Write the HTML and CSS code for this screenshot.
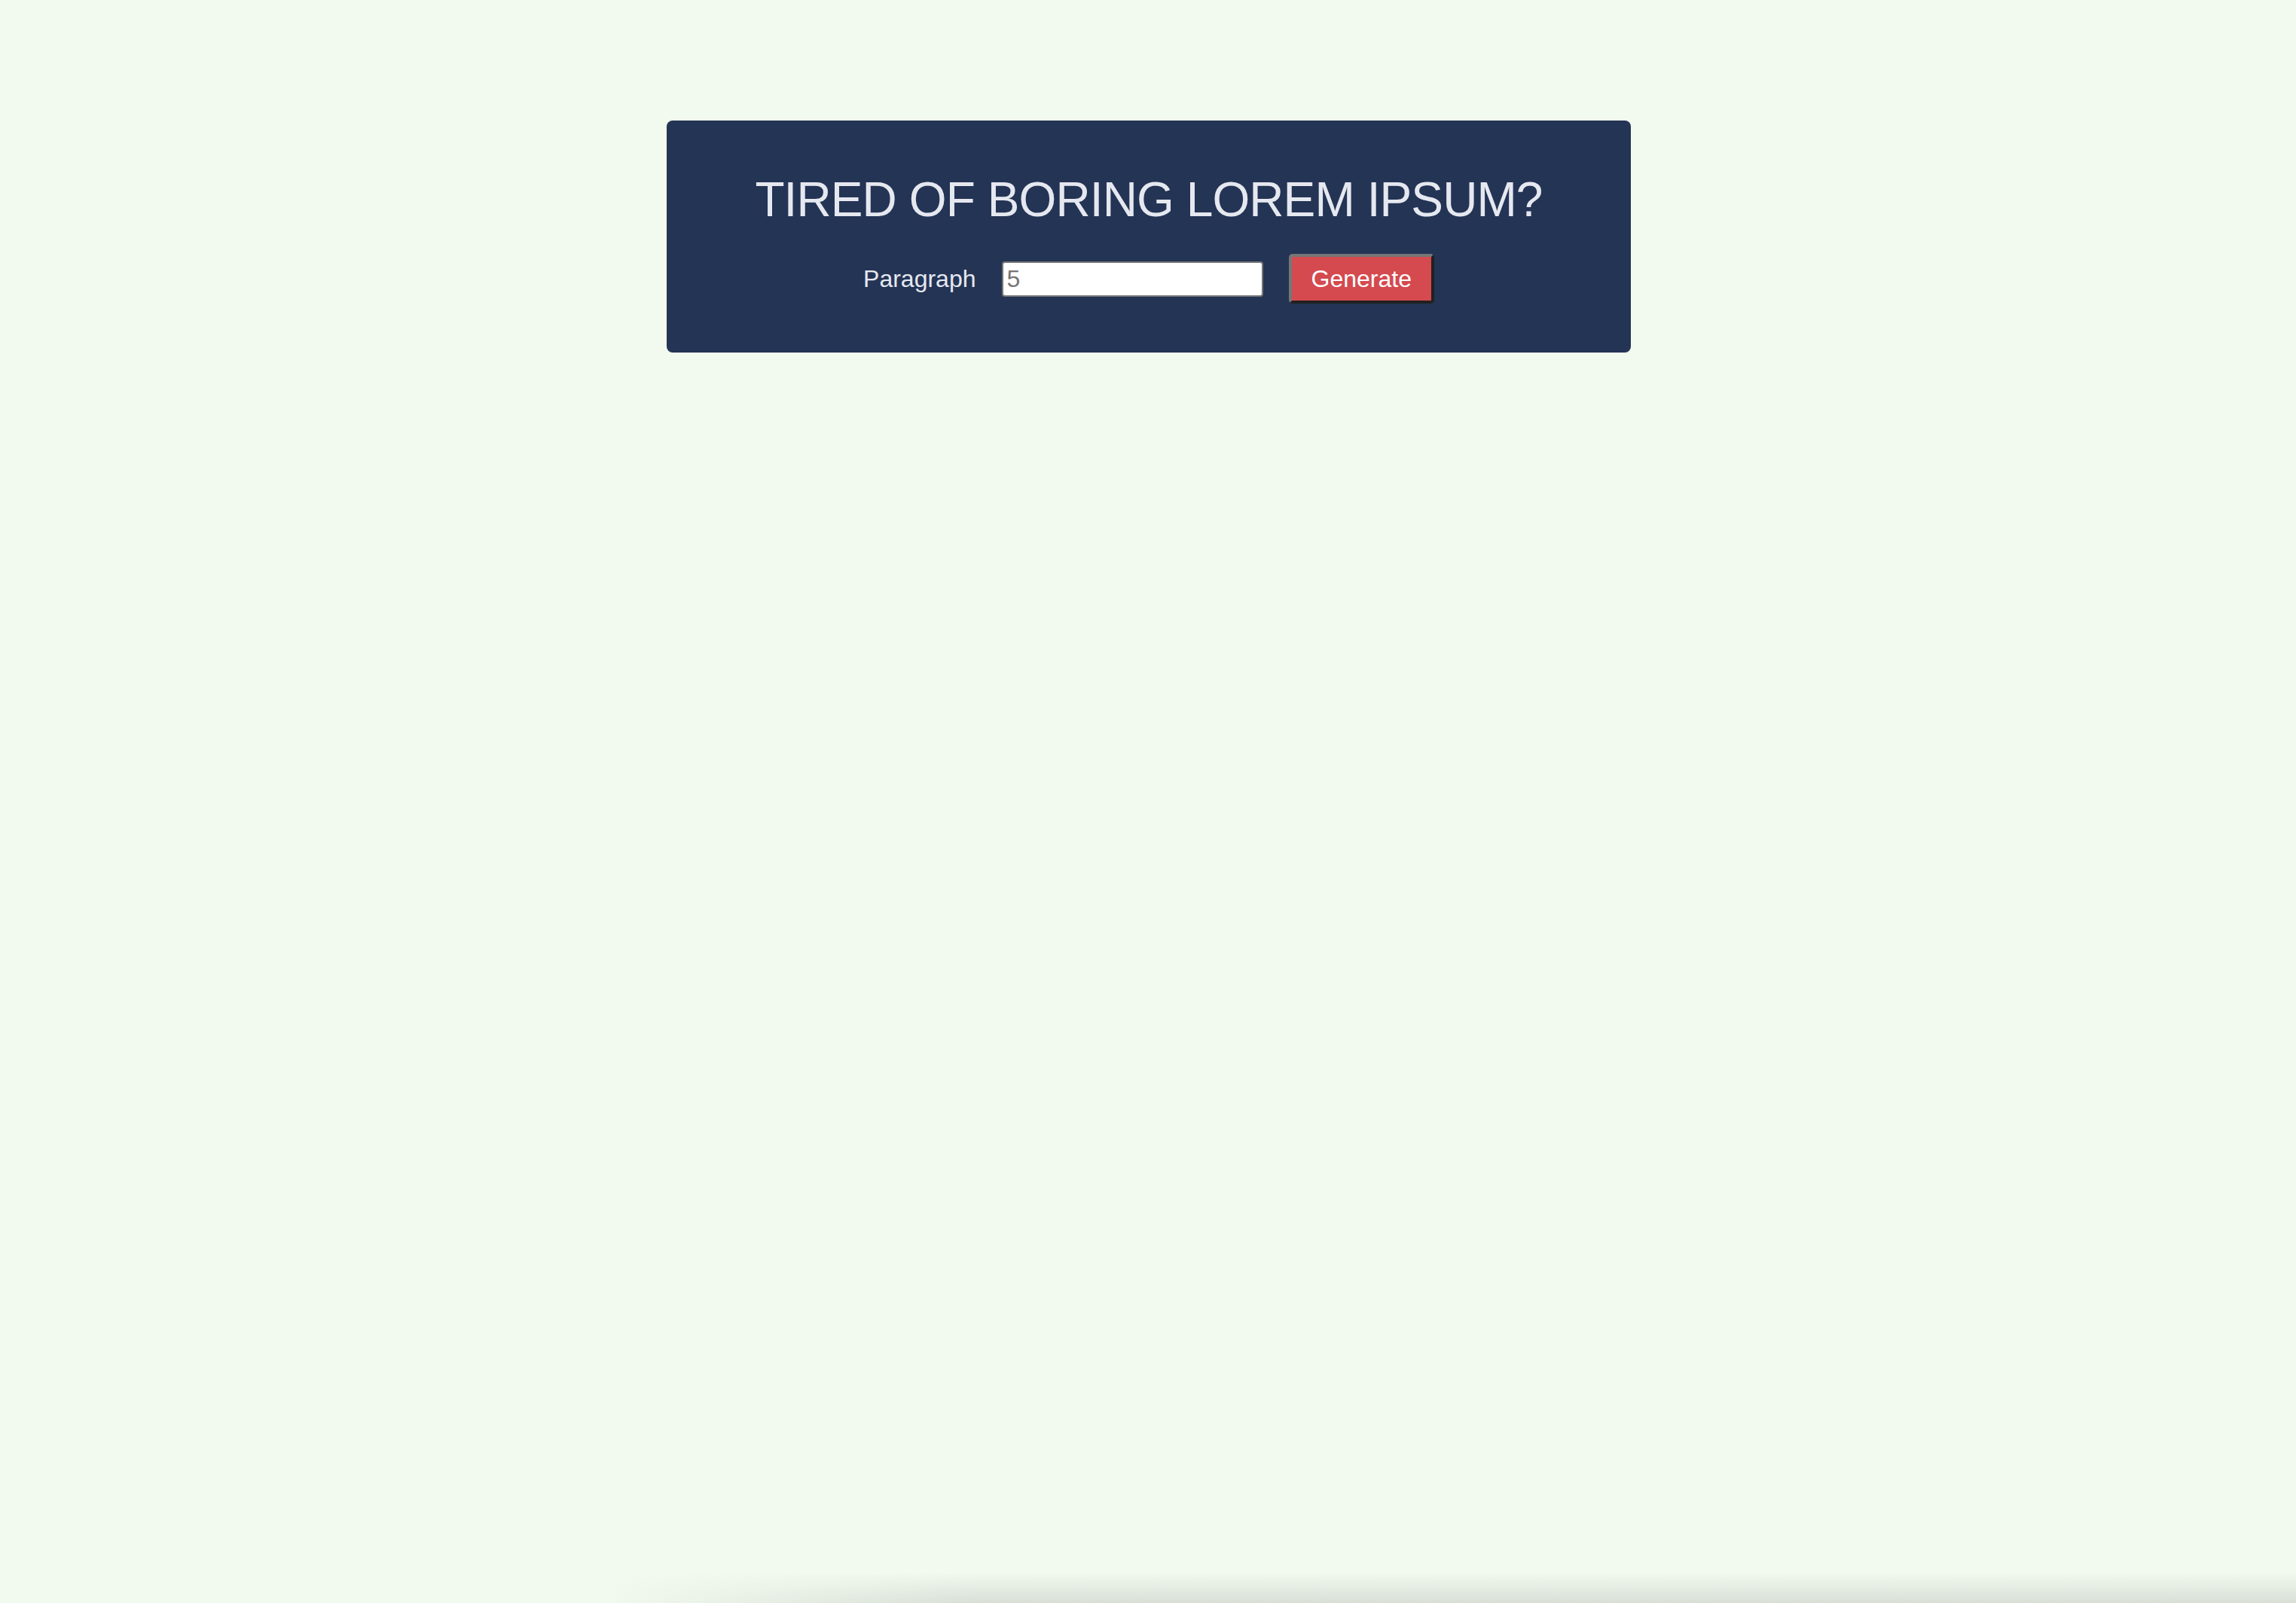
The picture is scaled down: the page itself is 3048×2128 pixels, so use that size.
FILE: index.html
```html
<!DOCTYPE html>
<html lang="en">
<head>
<meta charset="utf-8">
<title>Lorem Ipsum Generator</title>
<link rel="stylesheet" href="styles.css">
</head>
<body>
<main class="page">
  <section class="card">
    <h1 class="title">TIRED OF BORING LOREM IPSUM?</h1>
    <form class="controls">
      <label class="label" for="amount">Paragraph</label>
      <input class="amount" id="amount" type="number" placeholder="5">
      <button class="generate" type="button">Generate</button>
    </form>
  </section>
</main>
<div class="bottom-shade"></div>
</body>
</html>
```
FILE: styles.css
```css
html, body {
  margin: 0;
  padding: 0;
  height: 100%;
}
body {
  background: #f2f9ef;
  font-family: "Liberation Sans", Arial, Helvetica, sans-serif;
  overflow: hidden;
}
.page {
  padding-top: 160px;
  display: flex;
  justify-content: center;
}
.card {
  width: 1280px;
  margin-left: 2px;
  background: #243455;
  border-radius: 8px;
  padding: 68px 0 65px;
  box-sizing: border-box;
  display: flex;
  flex-direction: column;
  align-items: center;
}
.title {
  margin: 0 0 35px;
  font-size: 64px;
  font-weight: 400;
  color: #e6e8f0;
  line-height: normal;
  letter-spacing: -0.9px;
}
.controls {
  display: flex;
  align-items: center;
  gap: 34px;
  margin: 0;
}
.label {
  font-size: 32px;
  color: #e6e8f0;
  line-height: normal;
}
.amount {
  width: 347px;
  height: 47px;
  box-sizing: border-box;
  border: 2px solid #767676;
  border-radius: 4px;
  padding: 2px 5px;
  font-family: "Liberation Sans", Arial, sans-serif;
  font-size: 32px;
  background: #ffffff;
  color: #333;
  outline: none;
  -moz-appearance: textfield;
}
.amount::-webkit-outer-spin-button,
.amount::-webkit-inner-spin-button {
  -webkit-appearance: none;
  margin: 0;
}
.amount::placeholder {
  color: #757575;
}
.generate {
  box-sizing: border-box;
  height: 66px;
  padding: 0 26px;
  border: 4px outset #767676;
  border-radius: 5px;
  background: #d44a4f;
  color: #ffffff;
  font-family: "Liberation Sans", Arial, sans-serif;
  font-size: 32px;
  line-height: normal;
}
.bottom-shade {
  position: fixed;
  left: 800px;
  right: 0;
  bottom: 0;
  height: 40px;
  pointer-events: none;
  background: linear-gradient(to bottom, rgba(200, 210, 200, 0) 0%, rgba(205, 212, 204, 0.7) 100%);
  -webkit-mask-image: linear-gradient(to right, transparent 0, #000 500px);
  mask-image: linear-gradient(to right, transparent 0, #000 500px);
}
```
